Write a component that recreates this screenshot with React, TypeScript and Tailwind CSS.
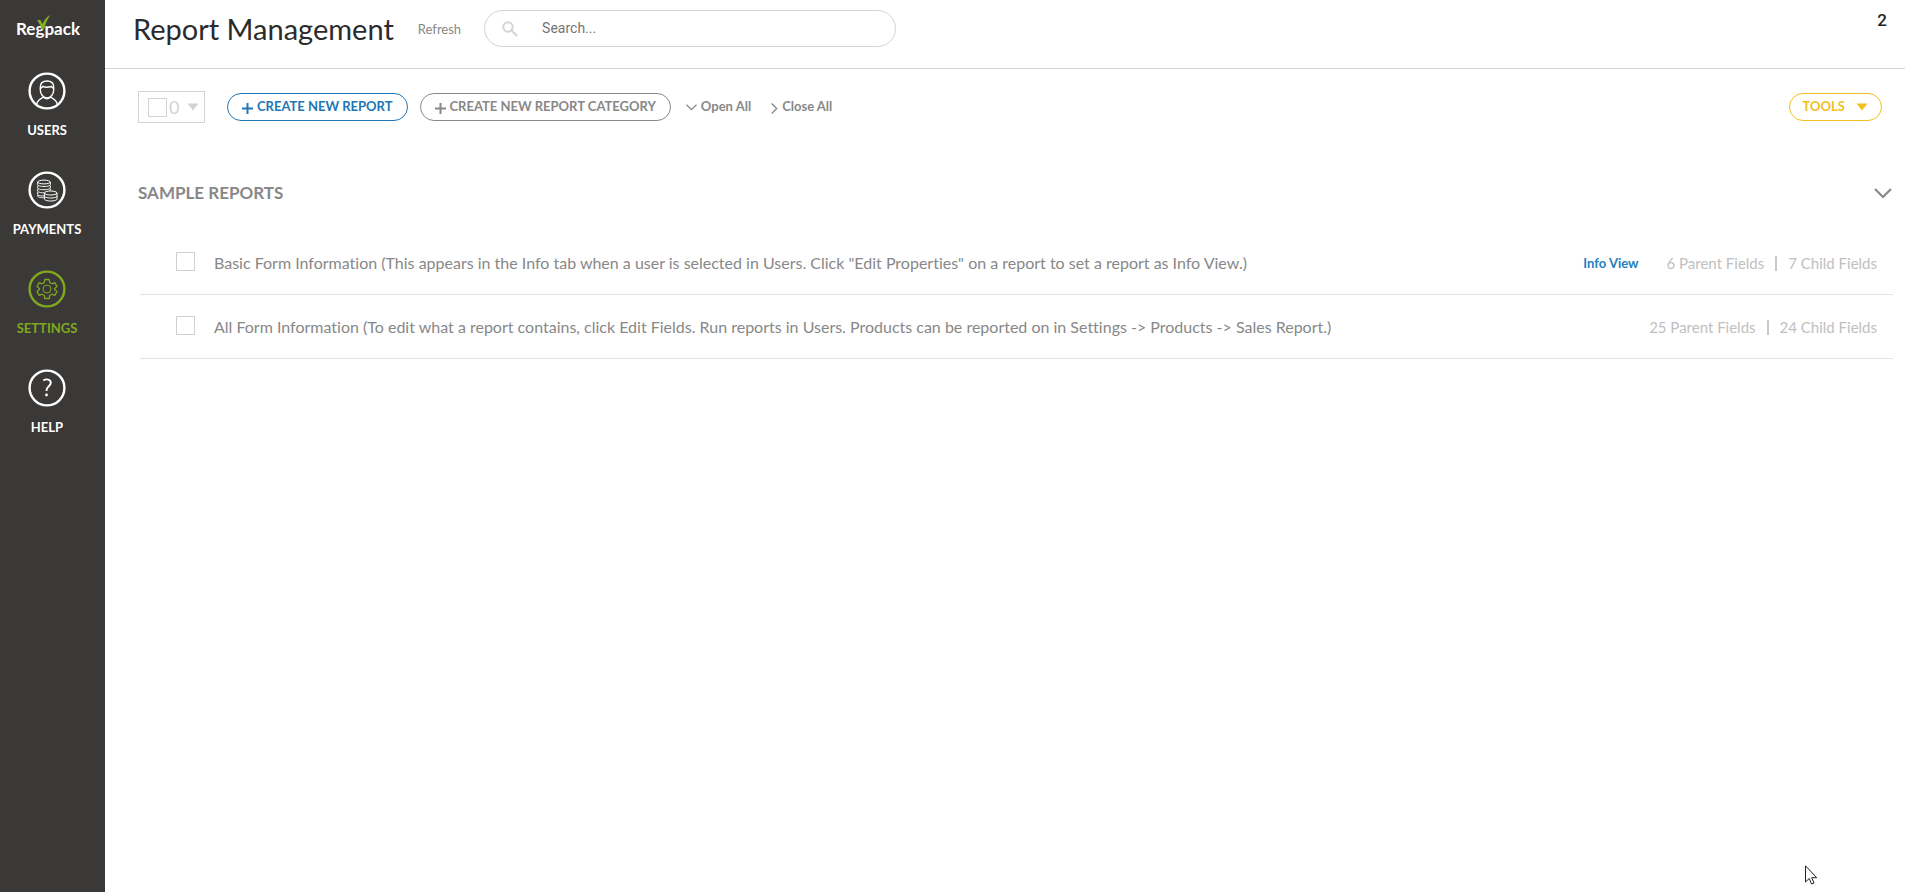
import type { ReactNode } from "react";

type NavItem = { label: string; icon: ReactNode; active?: boolean };

type Report = {
  id: string;
  name: string;
  infoView?: boolean;
  parentFields: number;
  childFields: number;
};

const reports: Report[] = [
  {
    id: "basic",
    name: 'Basic Form Information (This appears in the Info tab when a user is selected in Users. Click "Edit Properties" on a report to set a report as Info View.)',
    infoView: true,
    parentFields: 6,
    childFields: 7,
  },
  {
    id: "all",
    name: "All Form Information (To edit what a report contains, click Edit Fields. Run reports in Users. Products can be reported on in Settings -> Products -> Sales Report.)",
    parentFields: 25,
    childFields: 24,
  },
];

function RoundIcon({ children }: { children: ReactNode }) {
  return (
    <svg viewBox="0 0 38 38" className="size-[38px]" fill="none" stroke="currentColor" aria-hidden="true">
      <circle cx="19" cy="19" r="17.4" strokeWidth="2.4" />
      {children}
    </svg>
  );
}

const navItems: NavItem[] = [
  {
    label: "USERS",
    icon: (
      <RoundIcon>
        <g strokeWidth="1.4">
          <path d="M12.3 15.2C12.3 11.2 15 9 19 9s6.700 2.200 6.700 6.200v2.600c0 4.400-3 8.200-6.700 8.200s-6.700-3.800-6.700-8.200z" />
          <path d="M12.500 16.200c1.200-.3 1.700-1.500 2.200-1.700 2.500.8 6 .8 8.600 0 .5.200 1 1.400 2.200 1.700" />
          <path d="M8.700 32.500c.5-3.700 2.300-5.200 6.800-7.300 1.500 2 5.500 2 7 0 4.500 2.100 6.300 3.600 6.800 7.300" />
        </g>
      </RoundIcon>
    ),
  },
  {
    label: "PAYMENTS",
    icon: (
      <RoundIcon>
        <g strokeWidth="1">
          <ellipse cx="16" cy="11" rx="6.300" ry="1.900" />
          <path d="M9.700 11v2.600c0 1 2.800 1.900 6.300 1.900s6.300-.9 6.300-1.900V11M9.700 14.500v2.300c0 1 2.800 1.900 6.300 1.900s6.300-.9 6.300-1.900v-2.300M9.700 17.700V20c0 1 2.500 1.800 6.300 1.800M22.300 17.700v2M9.700 21v2.200c0 1 2.500 1.800 6.300 1.800M9.700 24v1c0 1 2.500 1.700 6 1.700" />
          <ellipse cx="22.700" cy="22" rx="6.300" ry="2" />
          <path d="M16.400 22v3c0 1.100 2.800 2 6.300 2s6.300-.9 6.300-2v-3M16.400 25v3c0 1.100 2.800 2 6.300 2s6.300-.9 6.300-2v-3" />
        </g>
      </RoundIcon>
    ),
  },
  {
    label: "SETTINGS",
    active: true,
    icon: (
      <RoundIcon>
        <circle cx="19" cy="19" r="4" strokeWidth="1" />
        <path
          strokeWidth="1.300"
          strokeLinejoin="round"
          d="M16.800 9.500h4.400l.5 3 2.200 1.300 2.900-1.100 2.200 3.800-2.400 1.900v1.200l2.400 1.900-2.200 3.800-2.900-1.100-2.200 1.300-.5 3h-4.400l-.5-3-2.200-1.300-2.900 1.100L9 21.500l2.400-1.900v-1.200L9 16.500l2.200-3.800 2.900 1.100 2.200-1.300z"
        />
      </RoundIcon>
    ),
  },
  {
    label: "HELP",
    icon: (
      <RoundIcon>
        <path strokeWidth="1.900" d="M15.300 11.500c3-2 7.500-1.200 7.500 2.200 0 3.500-4.300 3.800-4.300 7.800v.6" />
        <circle cx="18.500" cy="26" r="1.400" fill="currentColor" stroke="none" />
      </RoundIcon>
    ),
  },
];

function Triangle() {
  return (
    <svg viewBox="0 0 12 8" className="h-2 w-3" fill="currentColor" aria-hidden="true">
      <path d="M0.500 0.500h11L6 7.500z" />
    </svg>
  );
}

function Plus() {
  return (
    <svg viewBox="0 0 11 11" className="mt-[6px] size-[11px]" stroke="currentColor" strokeWidth="2" aria-hidden="true">
      <path d="M5.500 0v11M0 5.500h11" />
    </svg>
  );
}

function Sidebar() {
  return (
    <nav className="flex w-[105px] shrink-0 flex-col bg-[#3a3937] pr-[11px] font-bold text-white">
      <a href="#home" className="relative ml-4 mt-[17px] block h-[23px] w-[70px] text-[17px] leading-[23px]">
        Regpack
        <svg viewBox="0 0 14 15" className="absolute -top-[2px] left-[21px] h-[15px] w-[14px]" fill="#7fb01f" aria-hidden="true">
          <path d="M0 5.500l3.200-.8 2.300 4.300C7.200 5 9.500 1.800 13.300 0 10.500 4 8.500 8.500 7 14.300H4.800C3.500 10.500 2 7.800 0 5.500z" />
        </svg>
      </a>
      <ul className="mt-8 flex flex-col gap-[35px]">
        {navItems.map((item) => (
          <li key={item.label}>
            <a
              href={`#${item.label.toLowerCase()}`}
              className={`flex flex-col items-center gap-[14px] text-[13px] leading-3 ${item.active ? "text-[#7fa81f]" : "text-white"}`}
            >
              {item.icon}
              {item.label}
            </a>
          </li>
        ))}
      </ul>
    </nav>
  );
}

function Header() {
  return (
    <header className="flex h-[69px] items-start border-b border-[#d3d3d3] pl-7 pr-[18px]">
      <h1 className="mt-2 text-[29px] leading-[42px] text-[#2b2b2b]">Report Management</h1>
      <button type="button" className="ml-6 mt-5 text-[13px] leading-[18px] text-[#888]">
        Refresh
      </button>
      <div className="ml-[23px] mt-[10px] flex h-[37px] w-[412px] items-center rounded-full border border-[#d3d3d3] pl-[17px] pr-4">
        <svg viewBox="0 0 16 16" className="size-4 shrink-0 text-[#d3d3d3]" fill="none" stroke="currentColor" strokeWidth="2" aria-hidden="true">
          <circle cx="6" cy="6" r="4.700" />
          <path d="M9.400 9.400l5.600 5.600" />
        </svg>
        <input
          type="search"
          aria-label="Search reports"
          placeholder="Search..."
          className="ml-6 min-w-0 flex-1 bg-transparent font-['Roboto',sans-serif] text-[14px] outline-none placeholder:text-[#757575]"
        />
      </div>
      <span className="ml-auto mt-[10px] font-['Roboto',sans-serif] text-[17px] font-medium leading-5 text-[#222]">2</span>
    </header>
  );
}

function Toolbar() {
  return (
    <div className="flex items-center pl-[33px] pr-[23px] pt-[22px] text-[13px] font-bold text-[#888]">
      <div className="flex h-8 w-[67px] items-center border border-[#d3d3d3] pl-[9px] text-[18px] font-normal text-[#d3d3d3]">
        <input
          type="checkbox"
          aria-label="Select all reports"
          className="size-[19px] shrink-0 appearance-none border border-[#d3d3d3]"
        />
        <button type="button" aria-label="Selected reports menu" className="ml-[2px] flex items-center gap-2">
          0
          <Triangle />
        </button>
      </div>
      <button
        type="button"
        className="ml-[22px] flex h-7 items-center gap-1 rounded-full border border-[#2176b5] px-[14px] pb-[3px] leading-5 text-[#2176b5]"
      >
        <Plus />
        CREATE NEW REPORT
      </button>
      <button
        type="button"
        className="ml-3 flex h-7 items-center gap-1 rounded-full border border-[#888] px-[14px] pb-[3px] leading-5"
      >
        <Plus />
        CREATE NEW REPORT CATEGORY
      </button>
      <button type="button" className="ml-[15px] flex items-center gap-1 pb-[3px] leading-5">
        <svg viewBox="0 0 11 7" className="mt-1 h-[7px] w-[11px]" fill="none" stroke="currentColor" strokeWidth="1.300" aria-hidden="true">
          <path d="M0.500 0.700l5 5 5-5" />
        </svg>
        Open All
      </button>
      <button type="button" className="ml-5 flex items-center gap-1 pb-[3px] leading-5">
        <svg viewBox="0 0 7 11" className="mt-[6px] h-[11px] w-[7px]" fill="none" stroke="currentColor" strokeWidth="1.300" aria-hidden="true">
          <path d="M0.700 0.500l5 5-5 5" />
        </svg>
        Close All
      </button>
      <button
        type="button"
        className="ml-auto flex h-7 items-center gap-[11px] rounded-full border border-[#f2c01e] px-[13px] pb-[3px] leading-5 text-[#f2c01e]"
      >
        TOOLS
        <span className="mt-[3px]">
          <Triangle />
        </span>
      </button>
    </div>
  );
}

function ReportRow({ report }: { report: Report }) {
  return (
    <li className="flex h-16 items-center border-b border-[#e4e4e4] pl-9 pr-4">
      <input
        id={report.id}
        type="checkbox"
        className="mb-[2px] size-[19px] shrink-0 appearance-none border border-[#d0d0d0]"
      />
      <label htmlFor={report.id} className="ml-[19px] text-[16px] leading-5 text-[#888]">
        {report.name}
      </label>
      <div className="ml-auto flex items-center text-[15px] leading-5 text-[#c0c0c0]">
        {report.infoView && (
          <a href="#info-view" className="mr-7 text-[13px] font-bold text-[#2280c0]">
            Info View
          </a>
        )}
        <span>{report.parentFields} Parent Fields</span>
        <span className="mx-[11px] mt-px h-[15px] w-[2px] bg-[#c8c8c8]" />
        <span>{report.childFields} Child Fields</span>
      </div>
    </li>
  );
}

export default function App() {
  return (
    <div className="flex min-h-screen bg-white font-['Lato',sans-serif] [font-variant-ligatures:none]">
      <Sidebar />
      <div className="min-w-0 flex-1">
        <Header />
        <main>
          <Toolbar />
          <section className="pl-[33px] pr-3 pt-[58px]">
            <h2>
              <button
                type="button"
                className="flex w-full items-center justify-between pr-px text-[17px] font-bold leading-6 text-[#888]"
              >
                SAMPLE REPORTS
                <svg viewBox="0 0 18 11" className="h-[11px] w-[18px]" fill="none" stroke="currentColor" strokeWidth="2.200" aria-hidden="true">
                  <path d="M1 1l8 8 8-8" />
                </svg>
              </button>
            </h2>
            <ul className="pl-[2px] pt-[26px]">
              {reports.map((report) => (
                <ReportRow key={report.id} report={report} />
              ))}
            </ul>
          </section>
        </main>
      </div>
      <svg viewBox="0 0 13 20" className="pointer-events-none fixed bottom-[7px] right-[87px] h-5 w-[13px]" aria-hidden="true">
        <path d="M0.500 0.800v16.200l3.700-3.500 2.400 5.500 2.400-1-2.300-5.300h5z" fill="#fff" stroke="#222" strokeWidth="1" />
      </svg>
    </div>
  );
}
